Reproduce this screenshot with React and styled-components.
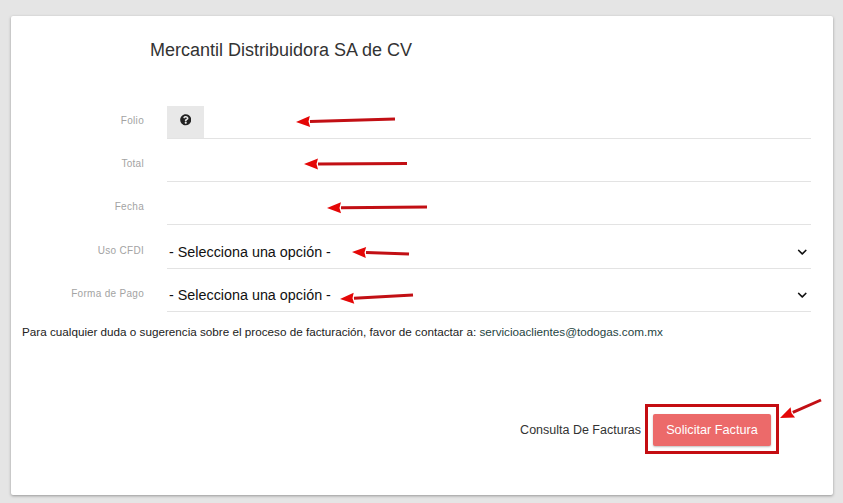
import React from "react";
import styled, { createGlobalStyle } from "styled-components";
import { FaChevronDown, FaQuestionCircle } from "react-icons/fa";

const Global = createGlobalStyle`
  html, body {
    margin: 0;
    padding: 0;
    background: #e5e5e5;
    font-family: "Liberation Sans", Arial, sans-serif;
  }
`;

const Page = styled.div`
  position: relative;
  width: 843px;
  height: 503px;
  box-sizing: border-box;
  padding: 16px 10px 8px 11px;
  overflow: hidden;
`;

const Card = styled.div`
  height: 479px;
  box-sizing: border-box;
  background: #fff;
  border-radius: 2px;
  box-shadow: 0 1px 3px rgba(0, 0, 0, 0.35);
  padding: 0 22px 0 11px;
  display: flex;
  flex-direction: column;
`;

const Title = styled.h2`
  margin: 0;
  height: 80px;
  box-sizing: border-box;
  padding: 24px 0 0 128px;
  font-size: 18px;
  line-height: 20px;
  font-weight: 400;
  color: #333;
`;

const Row = styled.div`
  display: grid;
  grid-template-columns: 122px 1fr;
  column-gap: 23px;
  margin-top: ${(p) => p.$gap || 10}px;
`;

const Label = styled.label`
  font-size: 10px;
  line-height: 12px;
  letter-spacing: 0.3px;
  color: #a3a3a3;
  text-align: right;
  padding-top: 9px;
`;

const Field = styled.div`
  position: relative;
  height: 33px;
  box-sizing: border-box;
  border-bottom: 1px solid #e3e3e3;
  display: flex;
  align-items: stretch;
`;

const Addon = styled.span`
  width: 37px;
  background: #e8e8e8;
  display: flex;
  align-items: center;
  justify-content: center;
  padding-bottom: 4px;
  box-sizing: border-box;
  color: #222;
  font-size: 11.5px;
`;

const Input = styled.input`
  flex: 1;
  min-width: 0;
  border: 0;
  outline: 0;
  background: transparent;
`;

const Select = styled.select`
  appearance: none;
  flex: 1;
  border: 0;
  outline: 0;
  background: transparent;
  font-family: inherit;
  font-size: 14.35px;
  color: #111;
  padding: 0 0 0 2px;
  margin: 0;
`;

const Chevron = styled(FaChevronDown)`
  position: absolute;
  right: 4px;
  top: 11px;
  font-size: 10.5px;
  color: #111;
  pointer-events: none;
`;

const Note = styled.p`
  margin: 12px 0 0;
  font-size: 11.7px;
  line-height: 16px;
  color: #222;
`;

const Mail = styled.a`
  color: #25443f;
  text-decoration: none;
`;

const Footer = styled.div`
  margin-top: auto;
  margin-bottom: 41px;
  display: flex;
  justify-content: flex-end;
  align-items: center;
  gap: 4px;
  margin-right: 32px;
`;

const LinkText = styled.a`
  margin-top: 2px;
  font-size: 12.5px;
  color: #333;
  text-decoration: none;
`;

const Highlight = styled.div`
  box-sizing: border-box;
  width: 134px;
  height: 50px;
  padding-top: 2px;
  border: 3px solid #c40d12;
  display: flex;
  align-items: center;
  justify-content: center;
`;

const SubmitButton = styled.button`
  width: 118px;
  height: 32px;
  border: 0;
  border-radius: 2px;
  background: #ec6a6a;
  color: #fff;
  font-family: inherit;
  font-size: 12.7px;
  font-weight: 400;
  box-shadow: 0 1px 2px rgba(0, 0, 0, 0.25);
`;

const Overlay = styled.svg`
  position: absolute;
  inset: 0;
  pointer-events: none;
`;

const arrows = [
  [395, 119, 296, 122],
  [407, 163.5, 304, 164],
  [427, 207, 327, 208],
  [409, 254, 352, 252],
  [413, 295, 340, 299],
  [821, 400, 780, 418],
];

// red annotation arrows drawn on top of the form
const Arrow = ({ from, to }) => {
  const [x1, y1] = from;
  const [x2, y2] = to;
  const a = Math.atan2(y2 - y1, x2 - x1);
  const ux = Math.cos(a);
  const uy = Math.sin(a);
  const bx = x2 - ux * 14;
  const by = y2 - uy * 14;
  const head = `${x2},${y2} ${bx - uy * 5.5},${by + ux * 5.5} ${bx + ux * 1.5},${by + uy * 1.5} ${bx + uy * 5.5},${by - ux * 5.5}`;
  return (
    <g>
      <line x1={x1} y1={y1} x2={bx} y2={by} stroke="#c20f14" strokeWidth="3" />
      <polygon points={head} fill="#e40707" />
    </g>
  );
};

const TextRow = ({ label }) => (
  <Row>
    <Label>{label}</Label>
    <Field>
      <Input />
    </Field>
  </Row>
);

const SelectRow = ({ label, gap }) => (
  <Row $gap={gap}>
    <Label>{label}</Label>
    <Field>
      <Select defaultValue="">
        <option value="">- Selecciona una opción -</option>
      </Select>
      <Chevron />
    </Field>
  </Row>
);

export default function App() {
  return (
    <Page>
      <Global />
      <Card>
        <Title>Mercantil Distribuidora SA de CV</Title>
        <Row>
          <Label>Folio</Label>
          <Field>
            <Addon>
              <FaQuestionCircle />
            </Addon>
            <Input />
          </Field>
        </Row>
        <TextRow label="Total" />
        <TextRow label="Fecha" />
        <SelectRow label="Uso CFDI" gap={11} />
        <SelectRow label="Forma de Pago" />
        <Note>
          Para cualquier duda o sugerencia sobre el proceso de facturación, favor de contactar a:{" "}
          <Mail href="#">servicioaclientes@todogas.com.mx</Mail>
        </Note>
        <Footer>
          <LinkText href="#">Consulta De Facturas</LinkText>
          <Highlight>
            <SubmitButton>Solicitar Factura</SubmitButton>
          </Highlight>
        </Footer>
      </Card>
      <Overlay width="843" height="503" viewBox="0 0 843 503">
        {arrows.map(([x1, y1, x2, y2]) => (
          <Arrow key={`${x1}-${y1}`} from={[x1, y1]} to={[x2, y2]} />
        ))}
      </Overlay>
    </Page>
  );
}
